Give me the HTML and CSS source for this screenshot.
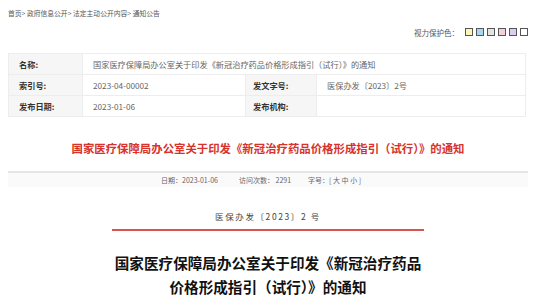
FILE: index.html
```html
<!DOCTYPE html>
<html lang="zh-CN">
<head>
<meta charset="utf-8">
<title>通知公告</title>
<link rel="stylesheet" href="styles.css">
</head>
<body>
<div class="page">
  <div class="crumb">首页&gt; 政府信息公开&gt; 法定主动公开内容&gt; 通知公告</div>
  <div class="vision">
    <span class="vision-label">视力保护色：</span>
    <span class="swatch sw-yellow"></span>
    <span class="swatch sw-blue"></span>
    <span class="swatch sw-gray"></span>
    <span class="swatch sw-pink"></span>
    <span class="swatch sw-purple"></span>
    <span class="swatch sw-white"></span>
  </div>
  <table class="info">
    <colgroup>
      <col class="c1"><col class="c2"><col class="c3"><col class="c4">
    </colgroup>
    <tr>
      <th>名称:</th>
      <td colspan="3">国家医疗保障局办公室关于印发《新冠治疗药品价格形成指引（试行）》的通知</td>
    </tr>
    <tr>
      <th>索引号:</th>
      <td>2023-04-00002</td>
      <th class="th2">发文字号:</th>
      <td>医保办发〔2023〕2号</td>
    </tr>
    <tr>
      <th>发布日期:</th>
      <td>2023-01-06</td>
      <th class="th2">发布机构:</th>
      <td></td>
    </tr>
  </table>
  <h1 class="red-title">国家医疗保障局办公室关于印发《新冠治疗药品价格形成指引（试行）》的通知</h1>
  <div class="meta">
    <span class="m-date">日期：2023-01-06</span>
    <span class="m-visits">访问次数： 2291</span>
    <span class="m-size">字号：[ 大 中 小 ]</span>
  </div>
  <div class="doc">
    <div class="doc-no">医保办发〔2023〕2 号</div>
    <div class="doc-line"></div>
    <h2 class="doc-title">国家医疗保障局办公室关于印发《新冠治疗药品<br>价格形成指引（试行）》的通知</h2>
  </div>
</div>
</body>
</html>
```

FILE: styles.css
```css
html, body {
  margin: 0;
  padding: 0;
  background: #fff;
  font-family: "Noto Sans CJK SC", "Noto Sans", sans-serif;
  color: #333;
}
.page {
  width: 520px;
  margin-left: 8px;
}
.crumb {
  padding-top: 8px;
  height: 10px;
  line-height: 10px;
  font-size: 6.8px;
  color: #555;
}
.vision {
  margin-top: 9px;
  height: 10px;
  display: flex;
  justify-content: flex-end;
  align-items: center;
  gap: 3px;
  padding-right: 0;
}
.vision-label {
  font-size: 7.5px;
  color: #555;
  margin-right: 3px;
}
.swatch {
  width: 6px;
  height: 6px;
  border: 1px solid #555;
}
.sw-yellow { background: #fbf7b4; }
.sw-blue { background: #a6d8f2; }
.sw-gray { background: #e3e3e3; }
.sw-pink { background: #f3d1dc; }
.sw-purple { background: #dccbf3; }
.sw-white { background: #fff; }
.info {
  margin-top: 16px;
  width: 517px;
  border-collapse: collapse;
  table-layout: fixed;
  font-size: 8.2px;
}
.c1 { width: 74px; }
.c2 { width: 163px; }
.c3 { width: 71px; }
.c4 { width: 209px; }
.info th, .info td {
  height: 20px;
  padding: 0 0 0 10px;
  border: 1px solid #ededed;
  text-align: left;
  white-space: nowrap;
  overflow: hidden;
}
.info th {
  background: #f6f6f6;
  color: #333;
  font-weight: 600;
}
.info th.th2 {
  padding-left: 7px;
}
.info td {
  color: #666;
  font-weight: 400;
}
.red-title {
  margin: 23px 0 0;
  text-align: center;
  font-size: 11.4px;
  line-height: 16px;
  font-weight: 700;
  color: #d7322c;
}
.meta {
  margin-top: 15px;
  height: 14px;
  border-top: 2px solid #e6e6e6;
  background: #fafafa;
  display: flex;
  align-items: center;
  font-size: 7px;
  color: #666;
}
.m-date { margin-left: 153px; }
.m-visits { margin-left: 21px; }
.m-size { margin-left: 17px; }
.doc {
  display: flex;
  flex-direction: column;
  align-items: center;
}
.doc-no {
  margin-top: 24px;
  height: 10px;
  line-height: 10px;
  font-size: 8.5px;
  letter-spacing: 1.6px;
  color: #444;
  font-family: "Noto Sans CJK SC", "DejaVu Serif", serif;
}
.doc-line {
  margin-top: 8px;
  width: 312px;
  height: 2px;
  background: #d9534f;
}
.doc-title {
  margin: 20px 0 0;
  text-align: center;
  font-size: 14.6px;
  line-height: 24px;
  font-weight: 700;
  color: #111;
}
```
